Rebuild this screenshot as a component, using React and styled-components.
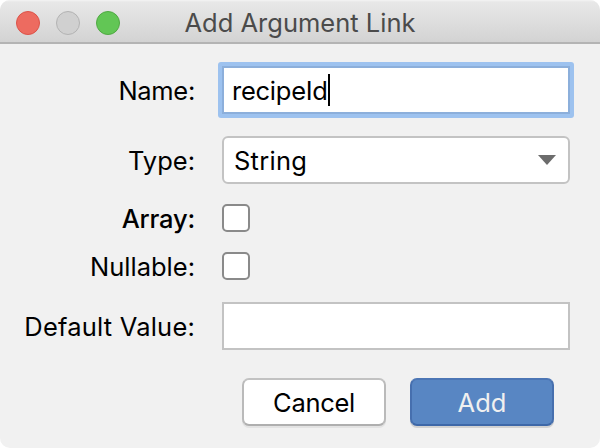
import React from "react";
import styled, { createGlobalStyle } from "styled-components";

const Global = createGlobalStyle`
  *, *::before, *::after { box-sizing: border-box; }
  body { margin: 0; background: #fff; font-family: Inter, Roboto, sans-serif; overflow: hidden; }
`;

const Dialog = styled.main`
  width: 600px;
  height: 448px;
  background: #f1f1f1;
  border-radius: 10px;
  overflow: hidden;
  color: #000;
  font-size: 25.5px;
`;

const TitleBar = styled.header`
  height: 44px;
  display: grid;
  grid-template-columns: 120px 1fr 120px;
  align-items: center;
  background: linear-gradient(#f4f4f4, #e8e8e8 2px, #d3d3d3);
  border-bottom: 2px solid #b4b4b4;
`;

const Lights = styled.div`
  display: flex;
  gap: 16px;
  padding: 2px 0 0 16px;
`;

const Light = styled.span`
  width: 24px;
  height: 24px;
  border-radius: 50%;
  background: ${(p) => p.$fill};
  border: 1px solid ${(p) => p.$edge};
`;

const Title = styled.h1`
  margin: 0;
  text-align: center;
  font-size: 25.5px;
  font-weight: 400;
  line-height: 42px;
  padding-top: 2px;
  white-space: nowrap;
  color: #4b4b4b;
`;

const Text = styled.span`
  display: inline-block;
  white-space: nowrap;
  line-height: 32px;
  padding-top: 1px;
  font-weight: ${(p) => p.$weight || 400};
  letter-spacing: ${(p) => p.$spacing || 0}px;
`;

const Form = styled.form`
  display: flex;
  flex-direction: column;
  padding-top: 22px;
`;

const Row = styled.div`
  display: grid;
  grid-template-columns: 195px 348px;
  grid-template-rows: 100%;
  column-gap: 27px;
  align-items: center;
  height: ${(p) => p.$height}px;
  margin-bottom: ${(p) => p.$gap}px;
`;

const Label = styled.label`
  display: flex;
  justify-content: flex-end;
  white-space: nowrap;
`;

const Field = styled.div`
  height: 48px;
  display: flex;
  align-items: center;
  padding: 0 8px;
  background: #fff;
  border: 2px solid ${(p) => (p.$focused ? "#8cafdb" : "#c3c3c3")};
`;

const FocusRing = styled.div`
  margin: -4px;
  padding: 4px;
  background: #9dc2ef;
  border-radius: 3px;
`;

const Caret = styled.span`
  width: 2px;
  height: 32px;
  background: #000;
`;

const Select = styled(Field)`
  justify-content: space-between;
  padding: 0 12px 0 10px;
  border-radius: 6px;
`;

const Checkbox = styled.span`
  width: 28px;
  height: 28px;
  background: #fff;
  border: 2px solid #8a8a8a;
  border-radius: 5px;
`;

const Actions = styled.footer`
  display: flex;
  gap: 24px;
  padding: 28px 0 0 242px;
`;

const Button = styled.button`
  width: 144px;
  height: 48px;
  padding: 0;
  border: 2px solid;
  border-color: ${(p) => (p.$primary ? "#4c76b5 #466fae #3e68a8" : "#c2c2c2 #bababa #afafaf")};
  border-radius: 7px;
  box-shadow: 0 2px 0 ${(p) => (p.$primary ? "#d2d2d2" : "#e3e3e3")};
  background: ${(p) => (p.$primary ? "#5886c3" : "#fff")};
  color: ${(p) => (p.$primary ? "#f0f0f0" : "#000")};
  font: 25.5px Inter, Roboto, sans-serif;
`;

export default function App() {
  return (
    <>
      <Global />
      <Dialog>
        <TitleBar>
          <Lights>
            <Light $fill="#ed6b60" $edge="#dc5349" />
            <Light $fill="#d0d0d0" $edge="#b3b3b3" />
            <Light $fill="#62c655" $edge="#50a943" />
          </Lights>
          <Title><Text>Add Argument Link</Text></Title>
          <span />
        </TitleBar>
        <Form>
          <Row $height={48} $gap={22}>
            <Label><Text $spacing={-0.3}>Name:</Text></Label>
            <FocusRing>
              <Field $focused><Text $spacing={-0.25}>recipeId</Text><Caret /></Field>
            </FocusRing>
          </Row>
          <Row $height={48} $gap={20}>
            <Label><Text>Type:</Text></Label>
            <Select>
              <Text $spacing={0.25}>String</Text>
              <svg width="18" height="10" viewBox="0 0 18 10"><path d="M0 0h18L9 10z" fill="#6c6c6c" /></svg>
            </Select>
          </Row>
          <Row $height={28} $gap={20}>
            <Label><Text $weight={500} $spacing={-0.2}>Array:</Text></Label>
            <Checkbox />
          </Row>
          <Row $height={28} $gap={22}>
            <Label><Text>Nullable:</Text></Label>
            <Checkbox />
          </Row>
          <Row $height={48} $gap={0}>
            <Label><Text $spacing={0.2}>Default Value:</Text></Label>
            <Field />
          </Row>
        </Form>
        <Actions>
          <Button type="button"><Text $spacing={-0.3}>Cancel</Text></Button>
          <Button type="button" $primary><Text>Add</Text></Button>
        </Actions>
      </Dialog>
    </>
  );
}
